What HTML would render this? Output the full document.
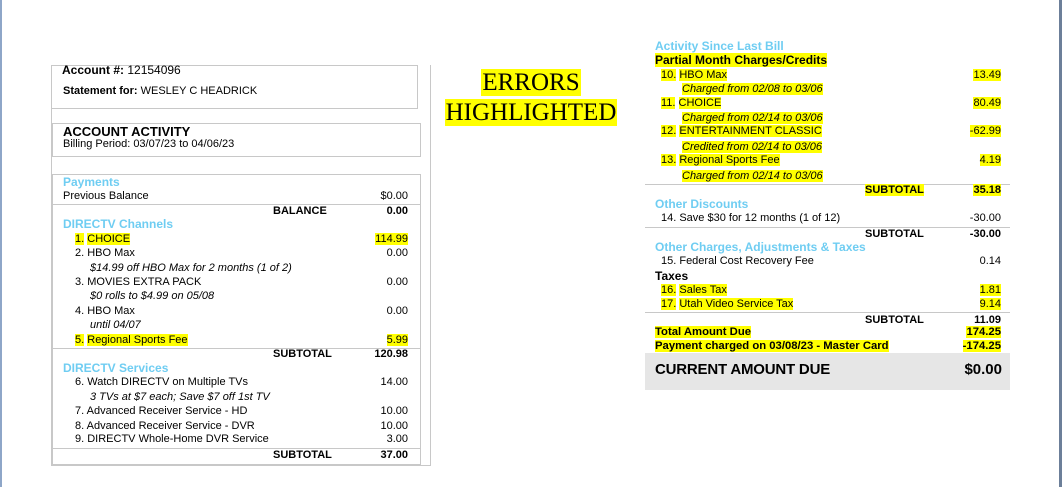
<!DOCTYPE html>
<html><head><meta charset="utf-8"><style>
*{margin:0;padding:0;box-sizing:border-box}
body{width:1062px;height:487px;position:relative;background:#fff;overflow:hidden;font-family:"Liberation Sans",sans-serif;font-size:11px;color:#000}
.a{position:absolute;line-height:14px;height:14px;white-space:nowrap}
.r{text-align:right}
.b{font-weight:bold}
.i{font-style:italic}
.h{color:#6fcdf2;font-weight:bold;font-size:12px}
.y{background:#ffff00}
.box{position:absolute;border:1px solid #c8c8c8}
.ln{position:absolute;height:1px;background:#c8c8c8}
</style></head><body>
<div style="position:absolute;left:0;top:0;width:2px;height:487px;background:#8ea6c8"></div>
<div style="position:absolute;right:0;top:0;width:3px;height:487px;background:#6c7f99"></div>

<div class="box" style="left:51px;top:65px;width:380px;height:401px;border-top:none"></div>
<div class="box" style="left:51px;top:65px;width:367px;height:44px;border-left:none"></div>
<div class="box" style="left:52px;top:123px;width:369px;height:34px"></div>
<div class="box" style="left:52px;top:174px;width:369px;height:291px"></div>

<div class="a b" style="left:62px;top:63px;font-size:12px">Account #: <span style="font-weight:normal">12154096</span></div>
<div class="a b" style="left:63px;top:84px">Statement for: <span style="font-weight:normal">WESLEY C HEADRICK</span></div>
<div class="a b" style="left:63px;top:125px;font-size:13px">ACCOUNT ACTIVITY</div>
<div class="a" style="left:63px;top:137px">Billing Period: 03/07/23 to 04/06/23</div>

<div class="a h" style="left:63px;top:175px">Payments</div>
<div class="a" style="left:63px;top:189px">Previous Balance</div>
<div class="a r" style="left:330px;top:189px;width:78px">$0.00</div>
<div class="ln" style="left:53px;top:204px;width:367px"></div>
<div class="a b" style="left:273px;top:204px">BALANCE</div>
<div class="a b r" style="left:330px;top:204px;width:78px">0.00</div>
<div class="a h" style="left:63px;top:217px">DIRECTV Channels</div>
<div class="a" style="left:75px;top:232px"><span class="y">1.</span> <span class="y">CHOICE</span></div>
<div class="a r" style="left:330px;top:232px;width:78px"><span class="y">114.99</span></div>
<div class="a" style="left:75px;top:246px">2. HBO Max</div>
<div class="a r" style="left:330px;top:246px;width:78px">0.00</div>
<div class="a i" style="left:90px;top:261px">$14.99 off HBO Max for 2 months (1 of 2)</div>
<div class="a" style="left:75px;top:275px">3. MOVIES EXTRA PACK</div>
<div class="a r" style="left:330px;top:275px;width:78px">0.00</div>
<div class="a i" style="left:90px;top:289px">$0 rolls to $4.99 on 05/08</div>
<div class="a" style="left:75px;top:304px">4. HBO Max</div>
<div class="a r" style="left:330px;top:304px;width:78px">0.00</div>
<div class="a i" style="left:90px;top:318px">until 04/07</div>
<div class="a" style="left:75px;top:333px"><span class="y">5.</span> <span class="y">Regional Sports Fee</span></div>
<div class="a r" style="left:330px;top:333px;width:78px"><span class="y">5.99</span></div>
<div class="ln" style="left:53px;top:348px;width:367px"></div>
<div class="a b" style="left:273px;top:347px">SUBTOTAL</div>
<div class="a b r" style="left:330px;top:347px;width:78px">120.98</div>
<div class="a h" style="left:63px;top:361px">DIRECTV Services</div>
<div class="a" style="left:75px;top:375px">6. Watch DIRECTV on Multiple TVs</div>
<div class="a r" style="left:330px;top:375px;width:78px">14.00</div>
<div class="a i" style="left:90px;top:390px">3 TVs at $7 each; Save $7 off 1st TV</div>
<div class="a" style="left:75px;top:404px">7. Advanced Receiver Service - HD</div>
<div class="a r" style="left:330px;top:404px;width:78px">10.00</div>
<div class="a" style="left:75px;top:419px">8. Advanced Receiver Service - DVR</div>
<div class="a r" style="left:330px;top:419px;width:78px">10.00</div>
<div class="a" style="left:75px;top:432px">9. DIRECTV Whole-Home DVR Service</div>
<div class="a r" style="left:330px;top:432px;width:78px">3.00</div>
<div class="ln" style="left:53px;top:448px;width:367px"></div>
<div class="a b" style="left:273px;top:448px">SUBTOTAL</div>
<div class="a b r" style="left:330px;top:448px;width:78px">37.00</div>

<div style="position:absolute;left:430px;top:68px;width:202px;text-align:center;font-family:'Liberation Serif',serif;font-size:25px;line-height:30px">
<span class="y" style="padding:0 1px">ERRORS</span><br><span class="y" style="padding:0 1px">HIGHLIGHTED</span></div>

<div class="a h" style="left:655px;top:39px">Activity Since Last Bill</div>
<div class="a b" style="left:655px;top:53px;font-size:12px"><span class="y">Partial Month Charges/Credits</span></div>
<div class="a" style="left:661px;top:68px"><span class="y">10.</span> <span class="y">HBO Max</span></div>
<div class="a r" style="left:920px;top:68px;width:81px"><span class="y">13.49</span></div>
<div class="a i" style="left:682px;top:82px"><span class="y">Charged from 02/08 to 03/06</span></div>
<div class="a" style="left:661px;top:96px"><span class="y">11.</span> <span class="y">CHOICE</span></div>
<div class="a r" style="left:920px;top:96px;width:81px"><span class="y">80.49</span></div>
<div class="a i" style="left:682px;top:111px"><span class="y">Charged from 02/14 to 03/06</span></div>
<div class="a" style="left:661px;top:124px"><span class="y">12.</span> <span class="y">ENTERTAINMENT CLASSIC</span></div>
<div class="a r" style="left:920px;top:124px;width:81px"><span class="y">-62.99</span></div>
<div class="a i" style="left:682px;top:140px"><span class="y">Credited from 02/14 to 03/06</span></div>
<div class="a" style="left:661px;top:153px"><span class="y">13.</span> <span class="y">Regional Sports Fee</span></div>
<div class="a r" style="left:920px;top:153px;width:81px"><span class="y">4.19</span></div>
<div class="a i" style="left:682px;top:169px"><span class="y">Charged from 02/14 to 03/06</span></div>
<div class="ln" style="left:645px;top:184px;width:365px"></div>
<div class="a b" style="left:865px;top:183px"><span class="y">SUBTOTAL</span></div>
<div class="a b r" style="left:920px;top:183px;width:81px"><span class="y">35.18</span></div>
<div class="a h" style="left:655px;top:197px">Other Discounts</div>
<div class="a" style="left:661px;top:211px">14. Save $30 for 12 months (1 of 12)</div>
<div class="a r" style="left:920px;top:211px;width:81px">-30.00</div>
<div class="ln" style="left:645px;top:227px;width:365px"></div>
<div class="a b" style="left:865px;top:227px">SUBTOTAL</div>
<div class="a b r" style="left:920px;top:227px;width:81px">-30.00</div>
<div class="a h" style="left:655px;top:240px">Other Charges, Adjustments &amp; Taxes</div>
<div class="a" style="left:661px;top:254px">15. Federal Cost Recovery Fee</div>
<div class="a r" style="left:920px;top:254px;width:81px">0.14</div>
<div class="a b" style="left:655px;top:269px;font-size:12px">Taxes</div>
<div class="a" style="left:661px;top:283px"><span class="y">16.</span> <span class="y">Sales Tax</span></div>
<div class="a r" style="left:920px;top:283px;width:81px"><span class="y">1.81</span></div>
<div class="a" style="left:661px;top:297px"><span class="y">17.</span> <span class="y">Utah Video Service Tax</span></div>
<div class="a r" style="left:920px;top:297px;width:81px"><span class="y">9.14</span></div>
<div class="ln" style="left:645px;top:312px;width:365px"></div>
<div class="a b" style="left:865px;top:313px">SUBTOTAL</div>
<div class="a b r" style="left:920px;top:313px;width:81px">11.09</div>
<div class="a b" style="left:655px;top:325px;font-size:11.3px"><span class="y">Total Amount Due</span></div>
<div class="a b r" style="left:920px;top:325px;width:81px;font-size:11.3px"><span class="y">174.25</span></div>
<div class="a b" style="left:655px;top:339px;font-size:11.3px"><span class="y">Payment charged on 03/08/23 - Master Card</span></div>
<div class="a b r" style="left:920px;top:339px;width:81px;font-size:11.3px"><span class="y">-174.25</span></div>
<div style="position:absolute;left:645px;top:353px;width:365px;height:37px;background:#e6e6e6"></div>
<div class="a b" style="left:655px;top:361px;font-size:15px;line-height:18px;height:18px;letter-spacing:-0.2px">CURRENT AMOUNT DUE</div>
<div class="a b r" style="left:920px;top:361px;width:82px;font-size:15px;line-height:18px;height:18px">$0.00</div>
</body></html>
